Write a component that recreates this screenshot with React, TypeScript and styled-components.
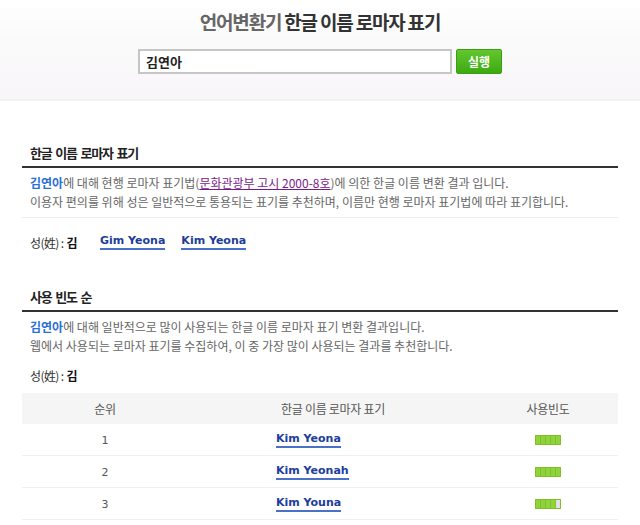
import React from 'react'
import styled, { createGlobalStyle } from 'styled-components'

const GlobalStyle = createGlobalStyle`
  html, body {
    margin: 0;
    padding: 0;
    background: #fff;
  }
  body {
    font-family: 'Noto Sans CJK KR', 'Noto Sans', sans-serif;
    color: #666;
  }
`

const rows = [
  { rank: 1, name: 'Kim Yeona', filled: 5 },
  { rank: 2, name: 'Kim Yeonah', filled: 5 },
  { rank: 3, name: 'Kim Youna', filled: 4 }
]

const App: React.FC = () => {
  return (
    <>
      <GlobalStyle />
      <Header>
        <Title>
          <Light>언어변환기</Light> 한글 이름 로마자 표기
        </Title>
        <SearchRow>
          <SearchInput defaultValue="김연아" />
          <RunButton>실행</RunButton>
        </SearchRow>
      </Header>

      <Content>
        <Section>
          <SectionTitle>한글 이름 로마자 표기</SectionTitle>
          <Desc $divider>
            <Line>
              <Name>김연아</Name>에 대해 현행 로마자 표기법(
              <Notice href="#">문화관광부 고시 2000-8호</Notice>)에 의한 한글 이름 변환 결과 입니다.
            </Line>
            <Line>
              이용자 편의를 위해 성은 일반적으로 통용되는 표기를 추천하며, 이름만 현행 로마자 표기법에 따라 표기합니다.
            </Line>
          </Desc>
          <Surname>
            성(姓) : <b>김</b>
            <RomanLink href="#">Gim Yeona</RomanLink>
            <RomanLink href="#">Kim Yeona</RomanLink>
          </Surname>
        </Section>

        <Section $second>
          <SectionTitle>사용 빈도 순</SectionTitle>
          <Desc>
            <Line>
              <Name>김연아</Name>에 대해 일반적으로 많이 사용되는 한글 이름 로마자 표기 변환 결과입니다.
            </Line>
            <Line>
              웹에서 사용되는 로마자 표기를 수집하여, 이 중 가장 많이 사용되는 결과를 추천합니다.
            </Line>
          </Desc>
          <Surname $tight>
            성(姓) : <b>김</b>
          </Surname>

          <Table>
            <HeadRow>
              <HeadCell>순위</HeadCell>
              <HeadCell>한글 이름 로마자 표기</HeadCell>
              <HeadCell>사용빈도</HeadCell>
            </HeadRow>
            {rows.map(r => (
              <Row key={r.rank}>
                <RankCell>{r.rank}</RankCell>
                <NameCell>
                  <RomanLink href="#">{r.name}</RomanLink>
                </NameCell>
                <FreqCell>
                  <Bar>
                    {[0, 1, 2, 3, 4].map(i => (
                      <Seg key={i} $on={i < r.filled} />
                    ))}
                  </Bar>
                </FreqCell>
              </Row>
            ))}
          </Table>
        </Section>
      </Content>
    </>
  )
}

export default App

const Header = styled.div`
  height: 99px;
  background: linear-gradient(#ffffff 0%, #fbfafb 40%, #f8f6f8 100%);
  border-bottom: 2px solid #f2f2f2;
  display: flex;
  flex-direction: column;
  align-items: center;
`
const Title = styled.h1`
  margin: 9px 0 0;
  font-size: 19px;
  line-height: 26px;
  font-weight: bold;
  letter-spacing: -1.2px;
  color: #333;
`
const Light = styled.span`
  color: #666;
`
const SearchRow = styled.div`
  display: flex;
  gap: 4px;
  margin-top: 14px;
`
const SearchInput = styled.input`
  box-sizing: border-box;
  width: 314px;
  height: 25px;
  border: 2px solid #c6c6c6;
  padding: 0 6px;
  font-family: 'Noto Sans CJK KR', sans-serif;
  font-size: 13px;
  font-weight: bold;
  color: #222;
  outline: none;
`
const RunButton = styled.button`
  box-sizing: border-box;
  width: 46px;
  height: 25px;
  border: 1px solid #3c9e12;
  border-radius: 2px;
  background: linear-gradient(#62c72e, #3ea913);
  color: #fff;
  font-family: 'Noto Sans CJK KR', sans-serif;
  font-size: 12px;
  font-weight: bold;
  padding: 0;
`
const Content = styled.div`
  padding: 0 22px;
`
const Section = styled.div<{ $second?: boolean }>`
  margin-top: ${({ $second }) => ($second ? '36px' : '43px')};
`
const SectionTitle = styled.h2`
  margin: 0;
  padding: 0 0 4px 8px;
  font-size: 13px;
  line-height: 18px;
  font-weight: bold;
  letter-spacing: -1.2px;
  word-spacing: 2px;
  color: #222;
  border-bottom: 2px solid #333;
`
const Desc = styled.div<{ $divider?: boolean }>`
  padding: 5px 0 ${({ $divider }) => ($divider ? '6px' : '0')} 8px;
  border-bottom: ${({ $divider }) => ($divider ? '1px solid #eee' : 'none')};
`
const Line = styled.div`
  font-size: 12px;
  line-height: 19px;
  letter-spacing: 0;
  color: #666;
`
const Name = styled.b`
  color: #2a6fd6;
`
const Notice = styled.a`
  color: #7a1a8a;
  text-decoration: underline;
`
const Surname = styled.div<{ $tight?: boolean }>`
  display: flex;
  align-items: center;
  padding: ${({ $tight }) => ($tight ? '10px 0 0 8px' : '14px 0 0 8px')};
  height: 20px;
  font-size: 12px;
  letter-spacing: -0.6px;
  color: #333;
  b {
    color: #111;
    margin-left: 3px;
    margin-right: 7px;
  }
`
const RomanLink = styled.a`
  font-family: 'DejaVu Sans', Verdana, sans-serif;
  font-size: 11px;
  font-weight: bold;
  letter-spacing: 0;
  color: #1d3d9a;
  text-decoration: none;
  border-bottom: 2px solid #4a70c8;
  line-height: 14px;
  margin-left: 16px;
`
const Table = styled.div`
  margin-top: 8px;
`
const gridCols = `
  display: grid;
  grid-template-columns: 166px 290px 1fr;
  align-items: center;
`
const HeadRow = styled.div`
  ${gridCols}
  height: 31px;
  background: #f5f5f5;
`
const HeadCell = styled.div`
  text-align: center;
  font-size: 12px;
  letter-spacing: -0.3px;
  color: #555;
`
const Row = styled.div`
  ${gridCols}
  height: 31px;
  border-bottom: 1px solid #eee;
`
const RankCell = styled.div`
  text-align: center;
  font-family: 'DejaVu Sans', sans-serif;
  font-size: 11px;
  line-height: 14px;
  padding-top: 2px;
  color: #555;
`
const NameCell = styled.div`
  display: flex;
  padding-left: 88px;
  padding-top: 1px;
  a {
    margin-left: 0;
  }
`
const FreqCell = styled.div`
  display: flex;
  justify-content: center;
`
const Bar = styled.div`
  display: flex;
  height: 8px;
  border: 1px solid #82c02a;
`
const Seg = styled.span<{ $on: boolean }>`
  width: 4px;
  height: 8px;
  background: ${({ $on }) => ($on ? '#8fd43a' : '#e2e2e2')};
  border-right: 1px solid ${({ $on }) => ($on ? '#7dbf2a' : '#d2d2d2')};
  &:last-child {
    border-right: none;
  }
`
